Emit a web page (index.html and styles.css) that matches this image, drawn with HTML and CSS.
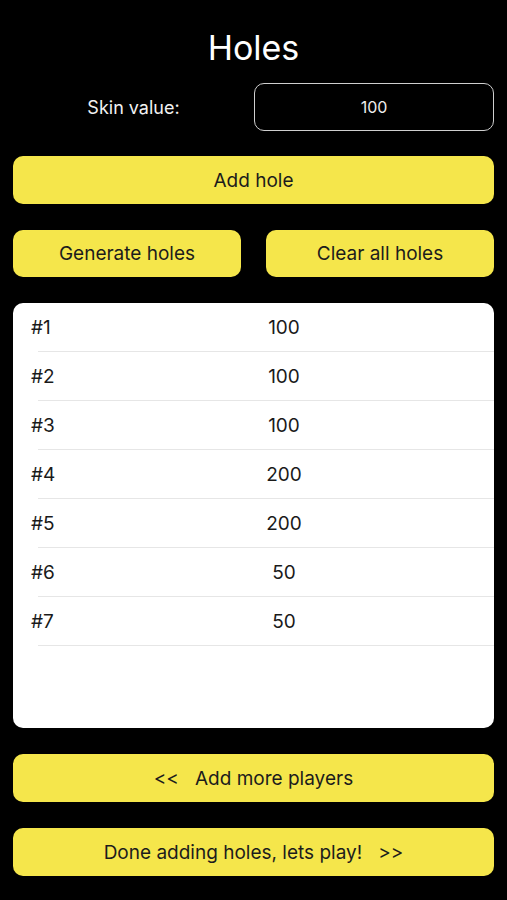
FILE: index.html
```html
<!DOCTYPE html>
<html>
<head>
<meta charset="utf-8">
<link rel="stylesheet" href="styles.css">
</head>
<body>
<div class="screen">
  <h1 class="title">Holes</h1>
  <div class="skin-row">
    <span class="skin-label">Skin value:</span>
    <div class="skin-input">100</div>
  </div>
  <button class="btn btn-add">Add hole</button>
  <div class="btn-pair">
    <button class="btn">Generate holes</button>
    <button class="btn">Clear all holes</button>
  </div>
  <div class="list">
    <div class="row"><span class="num">#1</span><span class="val">100</span></div>
    <div class="row"><span class="num">#2</span><span class="val">100</span></div>
    <div class="row"><span class="num">#3</span><span class="val">100</span></div>
    <div class="row"><span class="num">#4</span><span class="val">200</span></div>
    <div class="row"><span class="num">#5</span><span class="val">200</span></div>
    <div class="row"><span class="num">#6</span><span class="val">50</span></div>
    <div class="row"><span class="num">#7</span><span class="val">50</span></div>
  </div>
  <button class="btn btn-nav">&lt;&lt;&nbsp;&nbsp; Add more players</button>
  <button class="btn btn-nav">Done adding holes, lets play! &nbsp;&nbsp;&gt;&gt;</button>
</div>
</body>
</html>
```
FILE: styles.css
```css
* { box-sizing: border-box; }
html, body {
  margin: 0;
  padding: 0;
  background: #000;
}
body {
  font-family: Inter, "Noto Sans", "Liberation Sans", sans-serif;
  color: #fff;
}
.screen {
  width: 507px;
  height: 900px;
  padding: 26px 13px 0;
  display: flex;
  flex-direction: column;
}
.title {
  margin: 0;
  height: 44px;
  line-height: 44px;
  text-align: center;
  font-size: 34px;
  font-weight: 400;
  color: #fff;
}
.skin-row {
  margin-top: 13px;
  display: grid;
  grid-template-columns: 1fr 240px;
  align-items: center;
  height: 48px;
}
.skin-label {
  text-align: center;
  font-size: 18px;
  color: #f2f2f2;
}
.skin-input {
  height: 48px;
  border: 1.5px solid #cfcfcf;
  border-radius: 10px;
  display: flex;
  align-items: center;
  justify-content: center;
  font-size: 16px;
  color: #eee;
}
.btn {
  height: 48px;
  width: 100%;
  border: none;
  border-radius: 10px;
  background: #f5e64b;
  color: #1c1c1c;
  font-family: Inter, "Noto Sans", "Liberation Sans", sans-serif;
  font-size: 19px;
  font-weight: 400;
  padding: 0;
  margin: 0;
}
.btn-add {
  margin-top: 25px;
}
.btn-pair {
  margin-top: 26px;
  display: grid;
  grid-template-columns: 1fr 1fr;
  gap: 25px;
}
.btn-pair .btn {
  height: 47px;
}
.list {
  margin-top: 26px;
  height: 425px;
  background: #fff;
  border-radius: 10px;
  overflow: hidden;
}
.row {
  height: 49px;
  display: grid;
  grid-template-columns: 206px 80px;
  align-items: center;
  margin-left: 25px;
  border-bottom: 1px solid #e6e6e6;
  color: #1a1a1a;
  font-size: 19px;
}
.num {
  margin-left: -7px;
}
.val {
  text-align: center;
}
.btn-nav {
  margin-top: 26px;
}
```
